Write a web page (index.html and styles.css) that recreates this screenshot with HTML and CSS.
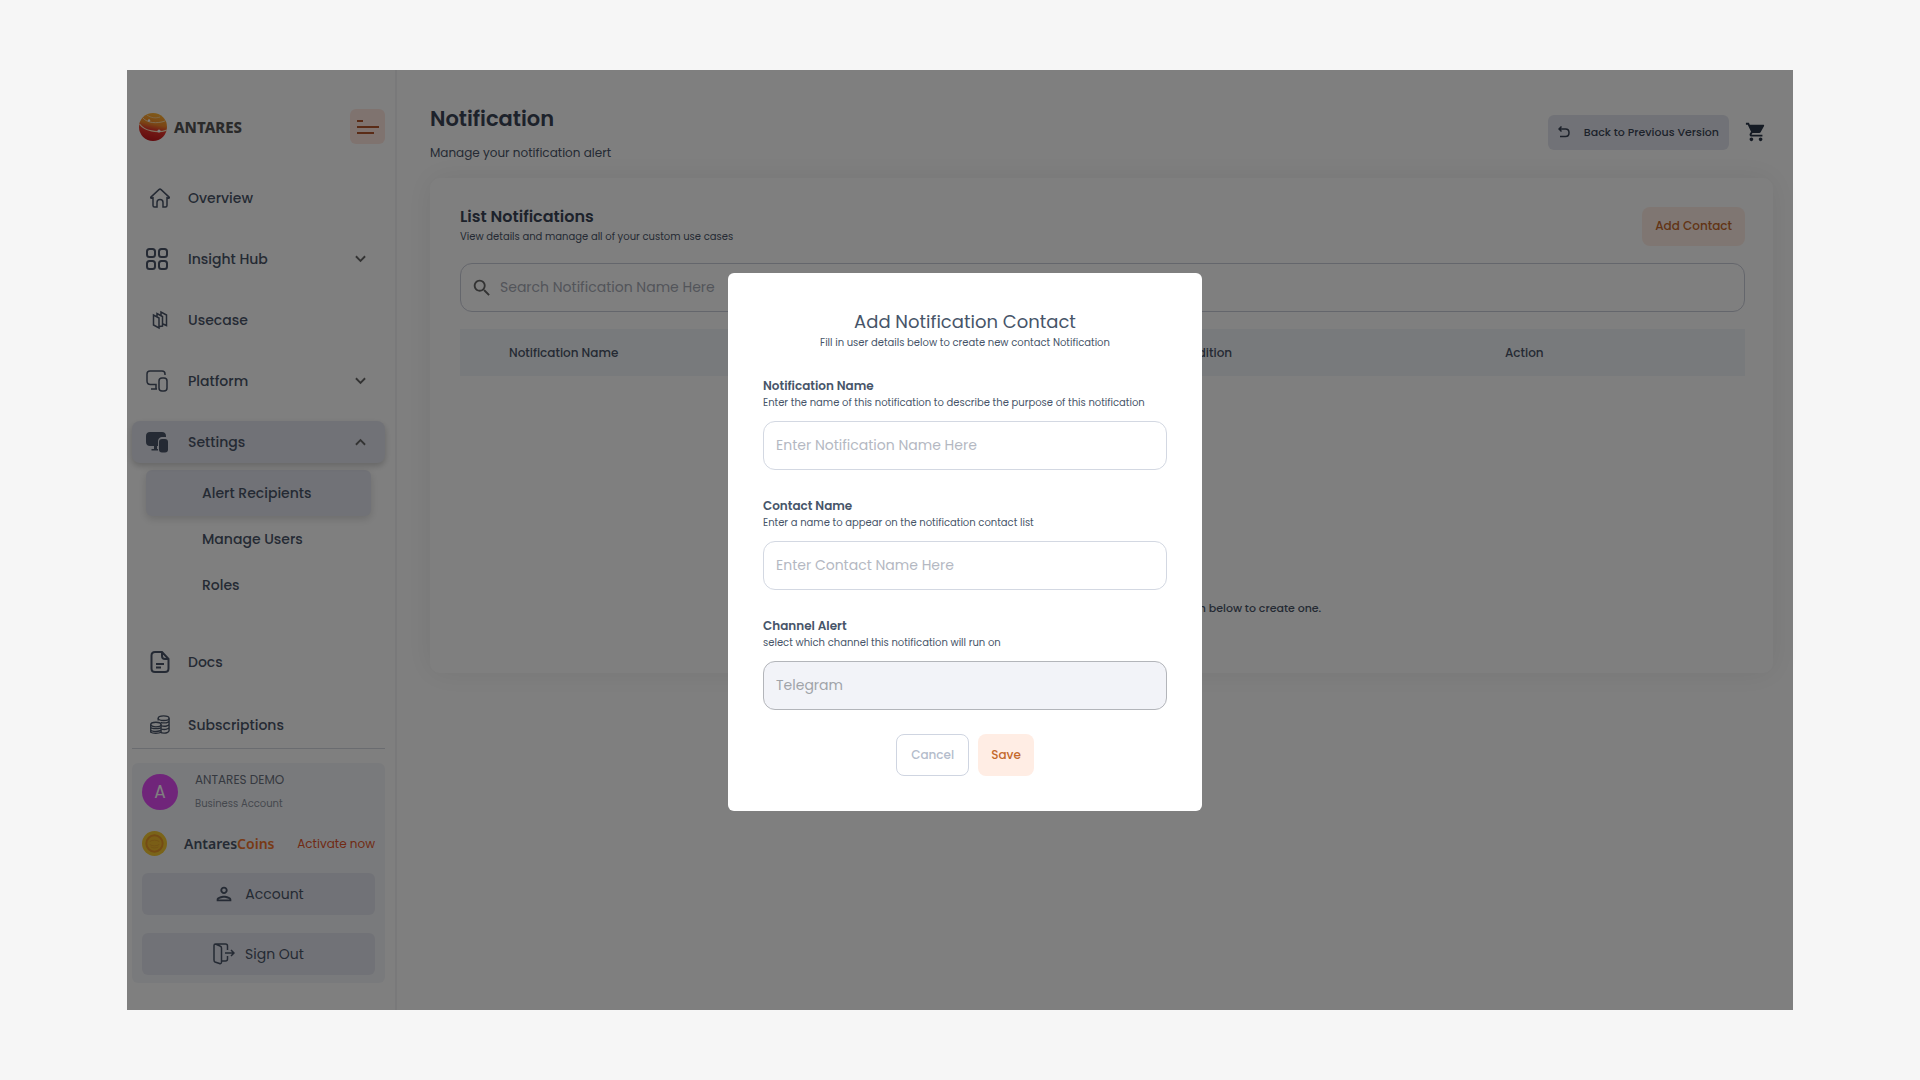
FILE: index.html
```html
<!DOCTYPE html>
<html lang="en">
  <head>
    <meta charset="UTF-8">
    <meta name="viewport" content="width=device-width, initial-scale=1.0">
    <title>Antares - Notification</title>
    <link rel="stylesheet" href="styles.css">
  </head>
  <body>
    <div class="app">
      <aside class="sidebar">
        <div class="brand">
          <svg class="logo" viewBox="0 0 28 28" aria-hidden="true">
            <defs>
              <linearGradient id="globe" x1="0.6" y1="0" x2="0.4" y2="1">
                <stop offset="0" stop-color="#ffb534"/>
                <stop offset="0.4" stop-color="#f58a2a"/>
                <stop offset="0.6" stop-color="#e8372c"/>
                <stop offset="1" stop-color="#c4161c"/>
              </linearGradient>
            </defs>
            <circle cx="14" cy="14" r="14" fill="url(#globe)"/>
            <g fill="none" stroke="#ffe9c4" stroke-width="0.8">
              <path d="M4 5c4 5 14 6 22 3"/>
              <path d="M8 2c4 3 9 3.500 13 2" stroke-width="0.6"/>
              <path d="M0.500 11c5 7 18 9.500 27.500 6" stroke-width="1.200"/>
            </g>
            <circle cx="10" cy="7.500" r="1.200" fill="#fff"/>
            <circle cx="20" cy="18" r="1.600" fill="#fff"/>
          </svg>
          <span class="brand-name">ANTARES</span>
          <button class="toggle" type="button" aria-label="Toggle menu">
            <svg width="22" height="16" viewBox="0 0 22 16"><path d="M0 2h6M0 8h22M0 14h17" stroke="currentColor" stroke-width="2"/></svg>
          </button>
        </div>

        <nav class="menu">
          <a class="item" href="#">
            <svg class="icon small" viewBox="0 0 20 20"><path d="M3 9.800 1.500 10.300c-.9 0-1.200-.6-.6-1.200l8-7.500c.7-.6 1.500-.6 2.200 0l8 7.500c.6.6.3 1.200-.6 1.200L17 9.800v7.700c0 1-.5 1.500-1.500 1.500H13v-4.500c0-2-.9-3-3-3s-3 1-3 3V19H4.500C3.500 19 3 18.500 3 17.500z"/></svg>
            <span>Overview</span>
          </a>
          <a class="item" href="#">
            <svg class="icon bold" viewBox="0 0 22 22"><rect x="1" y="1" width="8" height="8" rx="2.500"/><rect x="13" y="1" width="8" height="8" rx="2.500"/><rect x="1" y="13" width="8" height="8" rx="2.500"/><rect x="13" y="13" width="8" height="8" rx="2.500"/></svg>
            <span>Insight Hub</span>
            <svg class="chevron" viewBox="0 0 12 8"><path d="m1 1 5 5 5-5"/></svg>
          </a>
          <a class="item" href="#">
            <svg class="icon small" viewBox="-2.500 -1 20 20"><path d="M1 4v10l5.500 3V7zM4.500 5.500V2.500l5.500 3V15l-3 .500M8.500 4.500V1L14 4v10.500l-3.500-1.500"/></svg>
            <span>Usecase</span>
          </a>
          <a class="item" href="#">
            <svg class="icon" viewBox="0 0 22 22"><path d="M19 5V4c0-2-1-3-3-3H4C2 1 1 2 1 4v7c0 2.500 1 3.500 3.500 3.500H10V19M5 19h6"/><rect x="13" y="8" width="8" height="13" rx="3"/></svg>
            <span>Platform</span>
            <svg class="chevron" viewBox="0 0 12 8"><path d="m1 1 5 5 5-5"/></svg>
          </a>
          <a class="item active" href="#">
            <svg class="icon solid" viewBox="0 0 22 22"><path d="M4 1h12c2.500 0 4 1.500 4 4v1h-3c-3.500 0-5 1.500-5 5v4H4c-2.500 0-4-1.500-4-4V5c0-2.500 1.500-4 4-4zM8 15h3v3h1v1.500H5.500V18H8z"/><rect x="13" y="8" width="9" height="13.500" rx="3"/></svg>
            <span>Settings</span>
            <svg class="chevron" viewBox="0 0 12 8"><path d="m1 7 5-5 5 5"/></svg>
          </a>
        </nav>
        <div class="submenu">
          <a class="subitem active" href="#">Alert Recipients</a>
          <a class="subitem" href="#">Manage Users</a>
          <a class="subitem" href="#">Roles</a>
        </div>
        <nav class="menu menu-bottom">
          <a class="item" href="#">
            <svg class="icon small bold" viewBox="0 0 20 22"><path d="M12 1H5C3 1 1.500 2.500 1.500 4.500v13C1.500 19.500 3 21 5 21h10c2 0 3.500-1.500 3.500-3.500V8zM12 1v4c0 2 1 3 3 3h3.500M6 13h8M6 16.500h5"/></svg>
            <span>Docs</span>
          </a>
          <a class="item" href="#">
            <svg class="icon small" viewBox="0 1 22 20"><path d="M9 6V3.500M21 3.500V17c0 1.500-2.500 3-5.500 3-2 0-3.500-.5-4-1M12 8c1 .5 2 .7 3.500.7C18.500 8.700 21 7.500 21 6M12.500 12c4 1 8.500 0 8.500-2M12.500 15.500c4 1 8.500 0 8.500-2"/><ellipse cx="15" cy="3.500" rx="6" ry="2.500"/><ellipse cx="6.500" cy="10.500" rx="5.700" ry="2.500"/><path d="M.8 10.500V19c2 1.500 9 1.500 11.400 0v-8.500M.8 13.500c1 2 10 2 11.400 0M.8 16.500c1 2 10 2 11.400 0"/></svg>
            <span>Subscriptions</span>
          </a>
        </nav>

        <section class="account">
          <div class="profile">
            <div class="avatar">A</div>
            <div class="profile-text">
              <p class="profile-name">ANTARES DEMO</p>
              <p class="profile-type">Business Account</p>
            </div>
          </div>
          <div class="coins">
            <svg class="coin" viewBox="0 0 26 26" aria-hidden="true">
              <circle cx="13" cy="13" r="13" fill="#f5c832"/>
              <circle cx="13" cy="13" r="8.500" fill="#f5bd2c" stroke="#e8962a" stroke-width="2"/>
              <path d="M8 11c3-2 7-2 10 0M8 14c3 2 7 2 10 0M9 16.500c3 1.500 5 1.500 8 0" fill="none" stroke="#e8a62a" stroke-width="1"/>
            </svg>
            <span class="coins-name">Antares<span>Coins</span></span>
            <a class="activate" href="#">Activate now</a>
          </div>
          <button class="account-btn" type="button">
            <svg width="22" height="22" viewBox="0 0 24 24" fill="currentColor"><path d="M12 6a2 2 0 1 1 0 4 2 2 0 0 1 0-4m0 10c2.700 0 5.800 1.300 6 2H6c.2-.7 3.300-2 6-2m0-12C9.800 4 8 5.800 8 8s1.800 4 4 4 4-1.800 4-4-1.800-4-4-4zm0 10c-2.700 0-8 1.300-8 4v2h16v-2c0-2.700-5.300-4-8-4z"/></svg>
            Account
          </button>
          <button class="account-btn" type="button">
            <svg width="22" height="22" viewBox="0 0 22 22" fill="none" stroke="currentColor" stroke-width="1.500"><path d="M14.500 7V3c0-1.300-.7-2-2-2H2.500L7 3c1 .4 1.500 1 1.500 2v14c0 1.500-1 2-2 1.500L2 19c-.8-.4-1-1-1-2V2.500C1 1.500 1.500 1 2.500 1M8.500 18h4c1.300 0 2-.7 2-2v-3M12 10h9M18 7l3 3-3 3"/></svg>
            Sign Out
          </button>
        </section>
      </aside>

      <main class="main">
        <header class="header">
          <div>
            <h1 class="title">Notification</h1>
            <p class="subtitle">Manage your notification alert</p>
          </div>
          <div class="header-actions">
            <button class="back" type="button">
              <svg width="12" height="12" viewBox="0 0 12 12" fill="none" stroke="currentColor" stroke-width="1.500"><path d="M3.500 0.500 1 3l2.500 2.500M1 3h6.500c2 0 3.500 1.500 3.500 3.700S9.500 10.500 7.500 10.500H2"/></svg>
              Back to Previous Version
            </button>
            <button class="cart" type="button" aria-label="Cart">
              <svg width="22" height="22" viewBox="0 0 24 24" fill="currentColor"><path d="M7 18c-1.100 0-2 .9-2 2s.9 2 2 2 2-.9 2-2-.9-2-2-2zM1 2v2h2l3.600 7.600L5.200 14c-.2.300-.2.600-.2 1 0 1.100.9 2 2 2h12v-2H7.400c-.2 0-.2-.1-.2-.3L8.100 13h7.400c.8 0 1.400-.4 1.700-1l3.600-6.500c.4-.7-.1-1.500-.8-1.500H5.200L4.300 2H1zm16 16c-1.100 0-2 .9-2 2s.9 2 2 2 2-.9 2-2-.9-2-2-2z"/></svg>
            </button>
          </div>
        </header>

        <section class="card">
          <div class="card-head">
            <div>
              <h2 class="card-title">List Notifications</h2>
              <p class="card-text">View details and manage all of your custom use cases</p>
            </div>
            <button class="add" type="button">Add Contact</button>
          </div>
          <label class="search">
            <svg width="22" height="22" viewBox="0 0 24 24" fill="currentColor"><path d="M15.500 14h-.8l-.3-.3A6.500 6.500 0 1 0 13.700 14.400l.3.300v.8l5 5 1.500-1.500zm-6 0a4.500 4.500 0 1 1 0-9 4.500 4.500 0 0 1 0 9z"/></svg>
            <input type="text" placeholder="Search Notification Name Here" aria-label="Search">
          </label>
          <table class="list">
            <thead>
              <tr>
                <th>Notification Name</th>
                <th>Channel</th>
                <th>Condition</th>
                <th>Action</th>
              </tr>
            </thead>
          </table>
          <p class="empty">You don't have any notification yet. Please click the button below to create one.</p>
        </section>
      </main>

      <div class="overlay">
        <form class="modal">
          <h2 class="modal-title">Add Notification Contact</h2>
          <p class="modal-text">Fill in user details below to create new contact Notification</p>

          <div class="field">
            <label for="notification-name">Notification Name</label>
            <p class="hint">Enter the name of this notification to describe the purpose of this notification</p>
            <input id="notification-name" type="text" placeholder="Enter Notification Name Here">
          </div>
          <div class="field">
            <label for="contact-name">Contact Name</label>
            <p class="hint">Enter a name to appear on the notification contact list</p>
            <input id="contact-name" type="text" placeholder="Enter Contact Name Here">
          </div>
          <div class="field">
            <label for="channel">Channel Alert</label>
            <p class="hint">select which channel this notification will run on</p>
            <input id="channel" type="text" value="Telegram" disabled>
          </div>

          <div class="modal-actions">
            <button class="cancel" type="button">Cancel</button>
            <button class="save" type="button">Save</button>
          </div>
        </form>
      </div>
    </div>
  </body>
</html>
```
FILE: styles.css
```css
*{
    margin: 0;
    padding: 0;
    box-sizing: border-box;
    font-family: 'Poppins', 'Inter', sans-serif;
}

body{
    background: #f6f6f6;
    color: #4a5568;
    padding: 70px 127px;
}

button{
    border: 0;
    cursor: pointer;
}

a{
    color: inherit;
    text-decoration: none;
}

.app{
    position: relative;
    display: flex;
    min-height: calc(100vh - 140px);
    background: #fff;
}

/* sidebar */
.sidebar{
    width: 270px;
    flex-shrink: 0;
    padding: 39px 10px 26px 5px;
    border-right: 2px solid #f3f3f5;
}

.brand{
    display: flex;
    align-items: center;
    padding-left: 7px;
    margin-bottom: 33px;
}

.logo{
    width: 28px;
    height: 28px;
}

.brand-name{
    flex: 1;
    margin-left: 7px;
    font-family: 'Noto Sans', sans-serif;
    font-size: 15px;
    font-weight: 800;
    color: #555;
}

.toggle{
    display: flex;
    align-items: center;
    justify-content: center;
    width: 35px;
    height: 35px;
    border-radius: 6px;
    background: #ffe6df;
    color: #b5562c;
}

.menu{
    display: flex;
    flex-direction: column;
    gap: 19px;
}

.item{
    display: flex;
    align-items: center;
    height: 42px;
    padding: 0 19px 0 14px;
    border-radius: 8px;
    font-size: 14px;
    font-weight: 500;
}

.item span{
    flex: 1;
    margin-left: 20px;
}

.item.active{
    background: #e3e5ee;
    box-shadow: 0 3px 6px rgba(0, 0, 0, 0.2);
}

.icon{
    width: 22px;
    height: 22px;
    fill: none;
    stroke: currentColor;
    stroke-width: 1.5;
}

.icon.small{
    width: 20px;
    margin-left: 4px;
}

.icon.small + span{
    margin-left: 18px;
}

.icon.bold{
    stroke-width: 2;
}

.icon.solid{
    fill: currentColor;
    stroke: none;
}

.chevron{
    width: 11px;
    height: 8px;
    fill: none;
    stroke: #666;
    stroke-width: 2;
}

.submenu{
    padding: 7px 14px 0;
    margin-bottom: 33px;
}

.subitem{
    display: flex;
    align-items: center;
    height: 46px;
    padding-left: 56px;
    border-radius: 6px;
    font-size: 14px;
    font-weight: 500;
}

.subitem.active{
    background: #e3e5ee;
    box-shadow: 0 3px 8px rgba(0, 0, 0, 0.15);
}

.menu-bottom{
    gap: 21px;
    padding-bottom: 2px;
    border-bottom: 1px solid #d5d8e0;
}

.account{
    display: flex;
    flex-direction: column;
    margin-top: 14px;
    padding: 5px 10px 8px;
    border-radius: 6px;
    background: #f3f5f8;
}

.profile{
    display: flex;
    align-items: center;
}

.avatar{
    width: 36px;
    height: 36px;
    border-radius: 50%;
    background: #e04bf5;
    color: #fff;
    font-size: 17px;
    line-height: 36px;
    text-align: center;
}

.profile-text{
    margin-left: 17px;
}

.profile-name{
    font-size: 12px;
    line-height: 24px;
    color: #6b7280;
}

.profile-type{
    font-size: 10px;
    line-height: 24px;
    color: #8a909c;
}

.coins{
    display: flex;
    align-items: center;
    margin: 15px 0 17px;
}

.coin{
    width: 25px;
    height: 25px;
}

.coins-name{
    flex: 1;
    margin-left: 17px;
    font-family: 'Noto Sans', sans-serif;
    font-size: 14px;
    font-weight: 600;
}

.coins-name span{
    font-family: inherit;
    color: #f0742c;
}

.activate{
    font-size: 12px;
    color: #e2552b;
}

.account-btn{
    display: flex;
    align-items: center;
    justify-content: center;
    gap: 10px;
    height: 42px;
    border-radius: 6px;
    background: #e3e5ee;
    color: #4a5568;
    font-size: 14px;
}

.account-btn + .account-btn{
    margin-top: 18px;
}

/* main */
.main{
    flex: 1;
    padding: 33px 20px 0 33px;
}

.header{
    display: flex;
    align-items: center;
    justify-content: space-between;
}

.title{
    font-size: 21px;
    font-weight: 600;
    line-height: 32px;
    color: #3b4557;
}

.subtitle{
    margin-top: 6px;
    font-size: 12px;
    line-height: 24px;
}

.header-actions{
    display: flex;
    align-items: center;
    gap: 16px;
    padding: 0 6px 4px 0;
}

.back{
    display: flex;
    align-items: center;
    gap: 14px;
    height: 35px;
    padding: 0 10px;
    border-radius: 6px;
    background: #e3e5ee;
    color: #3b4557;
    font-size: 11px;
    font-weight: 500;
}

.cart{
    display: flex;
    background: none;
    color: #2b3648;
}

.card{
    margin-top: 13px;
    padding: 28px 28px 57px 30px;
    border-radius: 10px;
    background: #fff;
    box-shadow: 0 0 30px rgba(0, 0, 0, 0.08);
}

.card-head{
    display: flex;
    align-items: center;
    justify-content: space-between;
}

.card-title{
    font-size: 16px;
    font-weight: 600;
    line-height: 22px;
    color: #3b4557;
}

.card-text{
    font-size: 10px;
    line-height: 18px;
}

.add, .save{
    background: #ffede4;
    border-radius: 8px;
    color: #c4692c;
    font-size: 12px;
    font-weight: 500;
}

.add{
    height: 39px;
    padding: 0 13px;
}

.search{
    display: flex;
    align-items: center;
    height: 49px;
    margin-top: 17px;
    padding: 0 10px;
    border: 1px solid #c9ccd8;
    border-radius: 12px;
    color: #666;
}

.search input{
    flex: 1;
    margin-left: 7px;
    border: 0;
    outline: 0;
    background: none;
    font-size: 14px;
}

.search input::placeholder{
    color: #a6aab5;
}

.list{
    width: 100%;
    margin-top: 17px;
    table-layout: fixed;
    border-collapse: collapse;
}

.list th{
    width: 332px;
    height: 47px;
    padding-left: 49px;
    background: #f1f4f8;
    font-size: 12px;
    font-weight: 500;
    text-align: left;
}

.list th:last-child{
    width: auto;
}

.empty{
    padding-top: 224px;
    font-size: 11px;
    line-height: 16px;
    font-weight: 500;
    text-align: center;
}

/* modal */
.overlay{
    position: absolute;
    inset: 0;
    display: flex;
    align-items: center;
    justify-content: center;
    padding: 4px 0 0 10px;
    background: rgba(0, 0, 0, 0.5);
}

.modal{
    width: 474px;
    padding: 35px;
    border-radius: 6px;
    background: #fff;
    color: #475569;
}

.modal-title{
    font-size: 18px;
    font-weight: 400;
    line-height: 27px;
    text-align: center;
}

.modal-text{
    margin-bottom: 26px;
    font-size: 10px;
    line-height: 16px;
    text-align: center;
}

.field{
    display: flex;
    flex-direction: column;
    margin-bottom: 27px;
}

.field label{
    font-size: 12px;
    font-weight: 600;
    line-height: 18px;
}

.hint{
    font-size: 10px;
    line-height: 16px;
    white-space: nowrap;
}

.field input{
    height: 49px;
    margin-top: 10px;
    padding: 0 12px;
    border: 1px solid #d3d8e2;
    border-radius: 12px;
    outline: 0;
    font-size: 14px;
}

.field input::placeholder{
    color: #b4b8c2;
}

.field input:disabled{
    background: #f2f3f8;
    border-color: #b3b5ba;
    color: #a0a3a9;
}

.modal-actions{
    display: flex;
    justify-content: center;
    gap: 9px;
    margin-top: -3px;
}

.cancel{
    height: 42px;
    padding: 0 14px;
    border: 1px solid #cfd5e1;
    border-radius: 8px;
    background: #fff;
    color: #b4bccb;
    font-size: 12px;
    font-weight: 500;
}

.save{
    height: 42px;
    padding: 0 13px;
}
```
